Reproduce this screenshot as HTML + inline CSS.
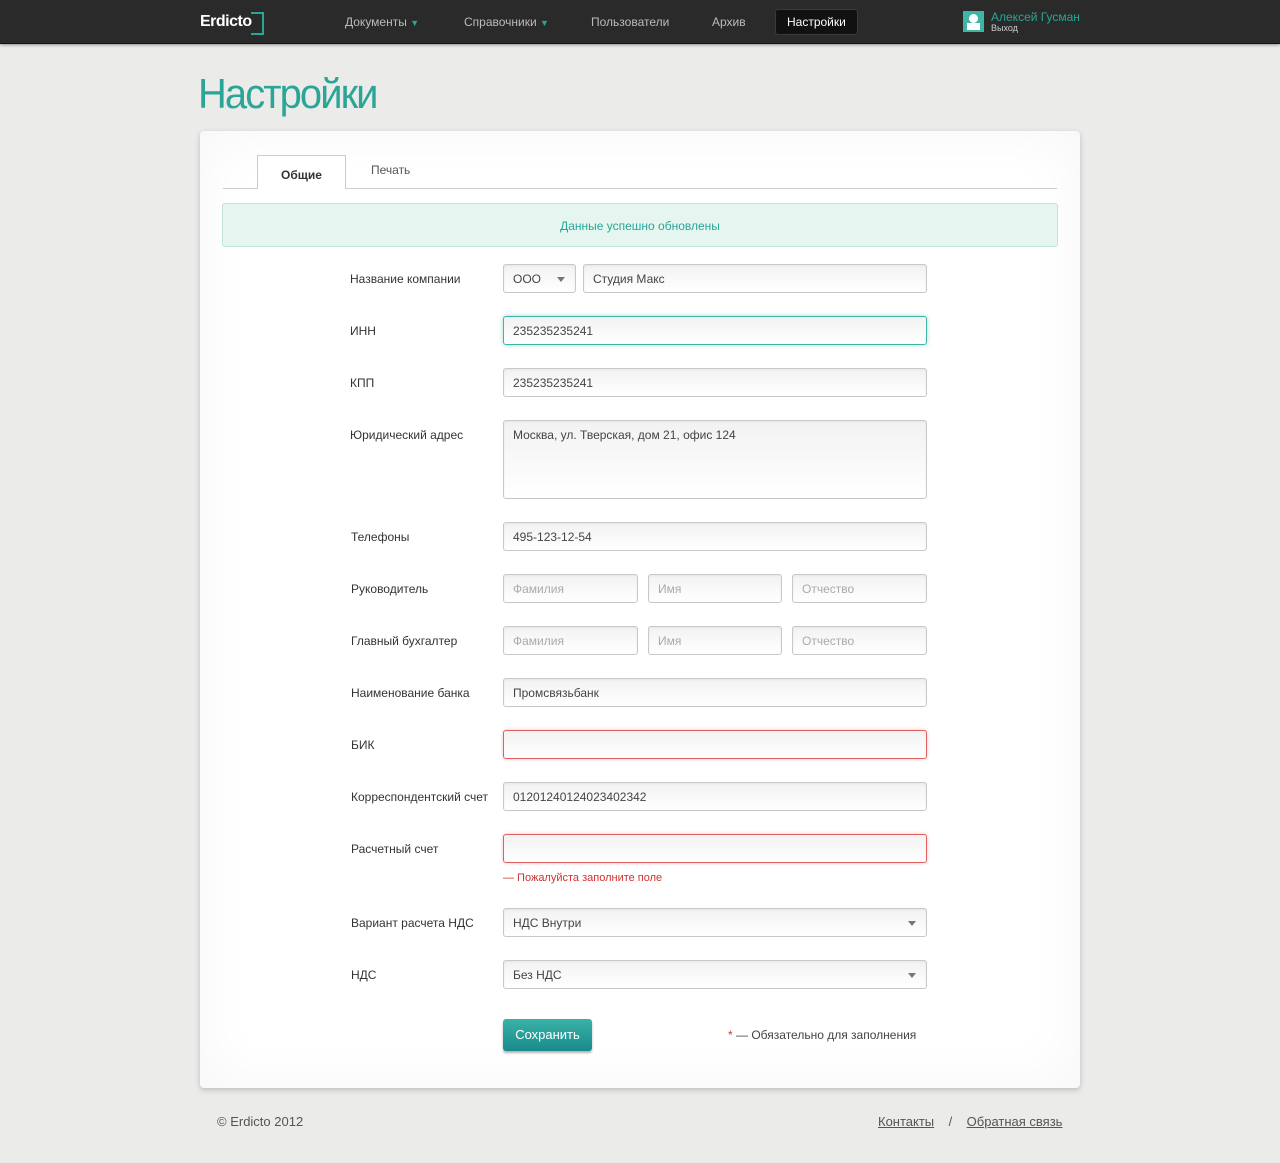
<!DOCTYPE html>
<html><head><meta charset="utf-8"><style>
*{box-sizing:border-box;margin:0;padding:0}
body{width:1280px;height:1163px;background:#ebebea;font-family:"Liberation Sans","Noto Sans CJK SC",sans-serif;position:relative;overflow:hidden;color:#333}
.nav{position:absolute;left:0;top:0;width:1280px;height:44px;background:#2a2a2a;border-bottom:1px solid #111;box-shadow:0 1px 3px rgba(0,0,0,.4)}
.nav a{position:absolute;top:15px;font-size:12px;color:#bbb}
.ab{position:absolute}
h1{position:absolute;left:198px;top:70px;font-size:42px;font-weight:normal;color:#2aa596;letter-spacing:-2px;transform:scaleX(.95);transform-origin:left}
.card{position:absolute;left:200px;top:131px;width:880px;height:957px;background:#fff;border-radius:4px;box-shadow:0 2px 6px rgba(0,0,0,.2), inset 0 0 60px rgba(0,0,0,.04)}
.lbl{position:absolute;left:351px;font-size:12px;color:#333}
.in{position:absolute;height:29px;border:1px solid #c8c8c8;border-radius:3px;background:linear-gradient(#f2f2f2,#fff);font-size:12px;color:#444;padding:7px 9px;box-shadow:inset 0 1px 2px rgba(0,0,0,.05)}
.ph{color:#aaa}
.err{border-color:#e06060;box-shadow:0 0 3px rgba(230,80,80,.4)}
.arr{position:absolute;right:10px;top:12px;border:4px solid transparent;border-top:5px solid #777;border-bottom:0}
</style></head><body>
<div class="nav">
<div class="ab" style="left:200px;top:13px;color:#fff;font-size:16px;font-weight:bold;letter-spacing:-.5px">Erdicto</div>
<div class="ab" style="left:251px;top:12px;width:13px;height:23px;border:2px solid #2aa596;border-left:0"></div>
<a style="left:345px">Документы <span style="color:#2aa596;font-size:9px">▼</span></a>
<a style="left:464px">Справочники <span style="color:#2aa596;font-size:9px">▼</span></a>
<a style="left:591px">Пользователи</a>
<a style="left:712px">Архив</a>
<div class="ab" style="left:775px;top:9px;width:83px;height:26px;background:#111;border-radius:3px;border:1px solid #3a3a3a"></div>
<a style="left:787px;color:#fff">Настройки</a>
<div class="ab" style="left:963px;top:11px;width:21px;height:21px;background:#3fb5a6"><div class="ab" style="left:6px;top:3px;width:9px;height:9px;border-radius:50%;background:#fff"></div><div class="ab" style="left:4px;top:12px;width:13px;height:7px;background:#fff"></div></div>
<div class="ab" style="left:991px;top:10px;font-size:12px;color:#2aa596">Алексей Гусман</div>
<div class="ab" style="left:991px;top:23px;font-size:9px;color:#ccc">Выход</div>
</div>
<h1>Настройки</h1>
<div class="card"></div>
<div class="ab" style="left:223px;top:188px;width:834px;height:1px;background:#ccc"></div>
<div class="ab" style="left:257px;top:155px;width:89px;height:34px;background:#fff;border:1px solid #ccc;border-bottom:0;font-size:12px;font-weight:bold;text-align:center;padding-top:12px">Общие</div>
<div class="ab" style="left:371px;top:163px;font-size:12px;color:#555">Печать</div>
<div class="ab" style="left:222px;top:203px;width:836px;height:44px;background:#e5f6f0;border:1px solid #c4e3d8;border-radius:3px;text-align:center;font-size:12px;color:#2aa596;padding-top:15px">Данные успешно обновлены</div>

<div class="lbl" style="left:350px;top:272px">Название компании</div>
<div class="in" style="left:503px;top:264px;width:73px">ООО<div class="arr"></div></div>
<div class="in" style="left:583px;top:264px;width:344px">Студия Макс</div>
<div class="lbl" style="left:350px;top:324px">ИНН</div>
<div class="in" style="left:503px;top:316px;width:424px;border-color:#3fb5a6;box-shadow:0 0 4px rgba(63,181,166,.5)">235235235241</div>
<div class="lbl" style="left:350px;top:376px">КПП</div>
<div class="in" style="left:503px;top:368px;width:424px">235235235241</div>
<div class="lbl" style="left:350px;top:428px">Юридический адрес</div>
<div class="in" style="left:503px;top:420px;width:424px;height:79px">Москва, ул. Тверская, дом 21, офис 124</div>
<div class="lbl" style="top:530px">Телефоны</div>
<div class="in" style="left:503px;top:522px;width:424px">495-123-12-54</div>
<div class="lbl" style="top:582px">Руководитель</div>
<div class="in ph" style="left:503px;top:574px;width:135px">Фамилия</div>
<div class="in ph" style="left:648px;top:574px;width:134px">Имя</div>
<div class="in ph" style="left:792px;top:574px;width:135px">Отчество</div>
<div class="lbl" style="top:634px">Главный бухгалтер</div>
<div class="in ph" style="left:503px;top:626px;width:135px">Фамилия</div>
<div class="in ph" style="left:648px;top:626px;width:134px">Имя</div>
<div class="in ph" style="left:792px;top:626px;width:135px">Отчество</div>
<div class="lbl" style="top:686px">Наименование банка</div>
<div class="in" style="left:503px;top:678px;width:424px">Промсвязьбанк</div>
<div class="lbl" style="top:738px">БИК</div>
<div class="in err" style="left:503px;top:730px;width:424px"></div>
<div class="lbl" style="top:790px">Корреспондентский счет</div>
<div class="in" style="left:503px;top:782px;width:424px">01201240124023402342</div>
<div class="lbl" style="top:842px">Расчетный счет</div>
<div class="in err" style="left:503px;top:834px;width:424px"></div>
<div class="ab" style="left:503px;top:872px;font-size:11px;color:#d03030">— Пожалуйста заполните поле</div>
<div class="lbl" style="top:916px">Вариант расчета НДС</div>
<div class="in" style="left:503px;top:908px;width:424px">НДС Внутри<div class="arr"></div></div>
<div class="lbl" style="top:968px">НДС</div>
<div class="in" style="left:503px;top:960px;width:424px">Без НДС<div class="arr"></div></div>
<div class="ab" style="left:503px;top:1019px;width:89px;height:32px;border-radius:3px;background:linear-gradient(#3ab3a6,#1a8a8d);color:#fff;font-size:13px;text-align:center;padding-top:8px;box-shadow:0 2px 2px rgba(0,0,0,.3)">Сохранить</div>
<div class="ab" style="left:728px;top:1028px;font-size:12px;color:#444"><span style="color:#d03030">*</span> — Обязательно для заполнения</div>
<div class="ab" style="left:217px;top:1114px;font-size:13px;color:#555">© Erdicto 2012</div>
<div class="ab" style="left:878px;top:1114px;font-size:13px;color:#555"><u>Контакты</u> &nbsp;&nbsp; / &nbsp;&nbsp; <u>Обратная связь</u></div>
</body></html>
